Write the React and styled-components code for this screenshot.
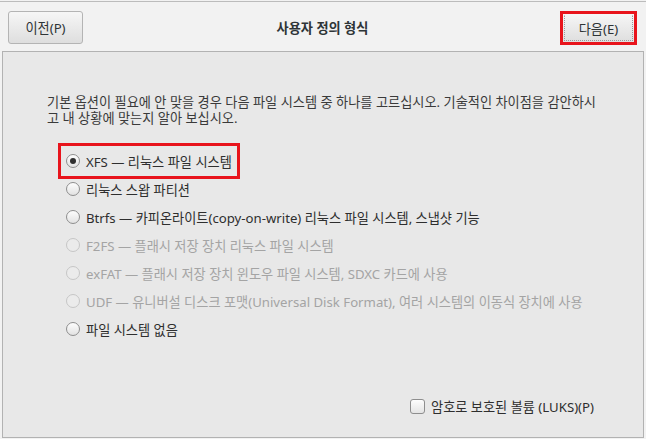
import React from 'react';
import styled, { createGlobalStyle } from 'styled-components';

const GlobalStyle = createGlobalStyle`
  html, body {
    margin: 0;
    padding: 0;
    background: #f2f2f2;
  }
  body {
    font-family: "Noto Sans", "Noto Sans CJK KR", sans-serif;
    font-size: 13.2px;
    color: #2e3436;
  }
`;

const options = [
  { id: 'xfs', label: 'XFS — 리눅스 파일 시스템', checked: true, highlighted: true },
  { id: 'swap', label: '리눅스 스왑 파티션' },
  { id: 'btrfs', label: 'Btrfs — 카피온라이트(copy-on-write) 리눅스 파일 시스템, 스냅샷 기능' },
  { id: 'f2fs', label: 'F2FS — 플래시 저장 장치 리눅스 파일 시스템', disabled: true },
  { id: 'exfat', label: 'exFAT — 플래시 저장 장치 윈도우 파일 시스템, SDXC 카드에 사용', disabled: true },
  { id: 'udf', label: 'UDF — 유니버설 디스크 포맷(Universal Disk Format), 여러 시스템의 이동식 장치에 사용', disabled: true },
  { id: 'none', label: '파일 시스템 없음' },
];

function App() {
  return (
    <>
      <GlobalStyle />
      <Window>
        <Header>
          <HeaderLeft>
            <Button>이전(P)</Button>
          </HeaderLeft>
          <Title>사용자 정의 형식</Title>
          <HeaderRight>
            <Button focused>다음(E)</Button>
          </HeaderRight>
        </Header>

        <Panel>
          <Intro>
            <IntroLine>기본 옵션이 필요에 안 맞을 경우 다음 파일 시스템 중 하나를 고르십시오. 기술적인 차이점을 감안하시</IntroLine>
            <IntroLine>고 내 상황에 맞는지 알아 보십시오.</IntroLine>
          </Intro>

          <RadioList>
            {options.map((opt) => (
              <RadioRow key={opt.id} disabled={opt.disabled} highlighted={opt.highlighted}>
                <Radio checked={opt.checked} disabled={opt.disabled} />
                <span>{opt.label}</span>
              </RadioRow>
            ))}
          </RadioList>

          <Footer>
            <CheckRow>
              <Checkbox />
              <span>암호로 보호된 볼륨 (LUKS)(P)</span>
            </CheckRow>
          </Footer>
        </Panel>
      </Window>
    </>
  );
}

const Window = styled.div`
  width: 646px;
  height: 439px;
  display: flex;
  flex-direction: column;
  background: #f2f2f2;
  border-top: 1px solid #bcbcbc;
  margin-top: 1px;
  box-sizing: border-box;
`;

const Header = styled.div`
  height: 49px;
  display: grid;
  grid-template-columns: 1fr auto 1fr;
  align-items: start;
  padding: 9px 9px 0 8px;
  box-sizing: border-box;
`;

const HeaderLeft = styled.div`
  display: flex;
  justify-content: flex-start;
`;

const HeaderRight = styled.div`
  display: flex;
  justify-content: flex-end;
`;

const Title = styled.div`
  font-weight: 600;
  color: #2e3436;
  line-height: 34px;
`;

const Button = styled.button`
  position: relative;
  width: ${(p) => (p.focused ? '77px' : '75px')};
  height: ${(p) => (p.focused ? '34px' : '33px')};
  font-family: inherit;
  font-size: 13.2px;
  color: #2e3436;
  border-radius: ${(p) => (p.focused ? '0' : '3px')};
  border: ${(p) => (p.focused ? '3px solid #e8141c' : '1px solid #b4b4b4')};
  background: linear-gradient(#f6f6f6, #dedede);
  padding: 0;
  box-sizing: border-box;
  &::after {
    content: '';
    display: ${(p) => (p.focused ? 'block' : 'none')};
    position: absolute;
    inset: 1px;
    border: 1px dotted #9a9a9a;
    border-top-color: transparent;
  }
`;

const Panel = styled.div`
  flex: 1;
  margin: 0 2px 2px 2px;
  border: 1px solid #b2b2b2;
  background: #e8e8e8;
  display: flex;
  flex-direction: column;
  padding: 42px 40px 0 44px;
  box-sizing: border-box;
`;

const Intro = styled.div`
  display: flex;
  flex-direction: column;
  color: #3a3a3a;
`;

const IntroLine = styled.span`
  display: block;
  height: 16px;
  line-height: 16px;
  white-space: nowrap;
`;

const RadioList = styled.div`
  display: flex;
  flex-direction: column;
  align-items: flex-start;
  margin-top: 21px;
  padding-left: 19px;
`;

const RadioRow = styled.label`
  display: inline-flex;
  align-items: center;
  gap: 6px;
  height: 28px;
  white-space: nowrap;
  color: ${(p) => (p.disabled ? '#a4a4a4' : '#2e2e2e')};
  outline: ${(p) => (p.highlighted ? '3px solid #e8141c' : 'none')};
  outline-offset: 1px;
  padding: 0 4px;
  margin-left: -4px;
`;

const Radio = styled.span`
  position: relative;
  width: 14px;
  height: 14px;
  border-radius: 50%;
  box-sizing: border-box;
  border: 1px solid ${(p) => (p.disabled ? '#c6c6c6' : '#8e8e8e')};
  background: ${(p) =>
    p.disabled ? '#ebebeb' : 'linear-gradient(#fdfdfd, #e2e2e2)'};
  flex-shrink: 0;
  &::after {
    content: '';
    display: ${(p) => (p.checked ? 'block' : 'none')};
    position: absolute;
    left: 3px;
    top: 3px;
    width: 6px;
    height: 6px;
    border-radius: 50%;
    background: #2e2e2e;
  }
`;

const Footer = styled.div`
  margin-top: auto;
  display: flex;
  justify-content: flex-end;
  padding-bottom: 21px;
  padding-right: 9px;
`;

const CheckRow = styled.label`
  display: inline-flex;
  align-items: center;
  gap: 6px;
  height: 20px;
  color: #2e2e2e;
  white-space: nowrap;
`;

const Checkbox = styled.span`
  width: 15px;
  height: 15px;
  box-sizing: border-box;
  border: 1px solid #8e8e8e;
  border-radius: 3px;
  background: linear-gradient(#fdfdfd, #e4e4e4);
`;

export default App;
